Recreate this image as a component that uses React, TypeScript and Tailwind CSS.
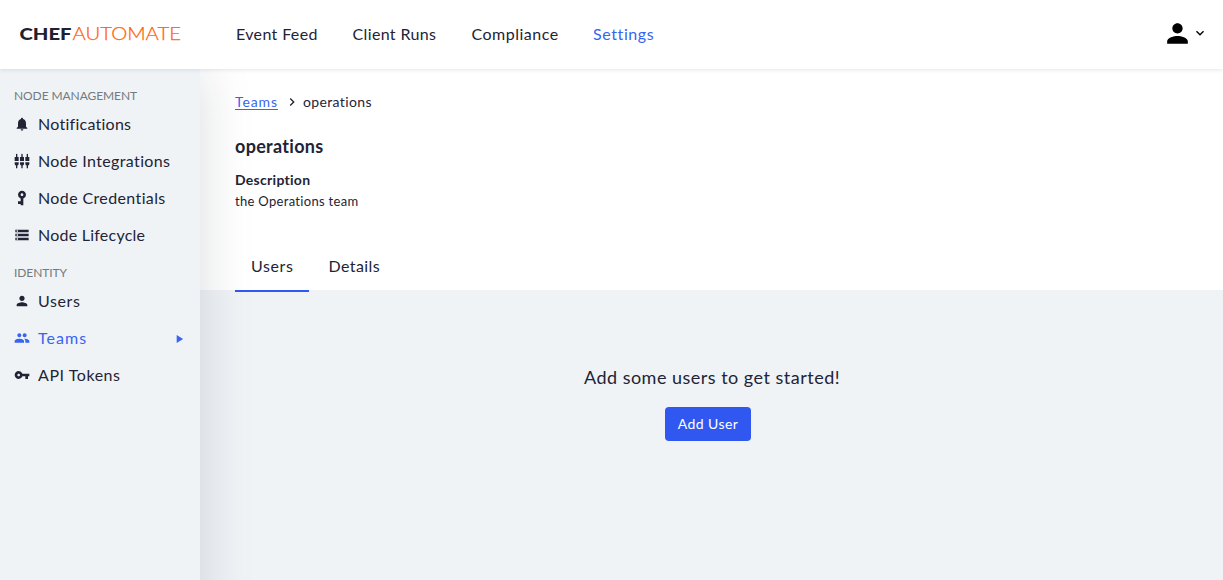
import React from "react";
import {
  MdChevronRight,
  MdExpandMore,
  MdNotifications,
  MdPeople,
  MdPerson,
  MdPlayArrow,
  MdSettingsInputComponent,
  MdStorage,
  MdVpnKey,
} from "react-icons/md";

type Item = {
  label: string;
  icon: React.ReactNode;
  tracking: string;
  active?: boolean;
};

const nodeItems: Item[] = [
  { label: "Notifications", icon: <MdNotifications size={16} />, tracking: "tracking-[0.26px]" },
  { label: "Node Integrations", icon: <MdSettingsInputComponent size={16} />, tracking: "tracking-[0.36px]" },
  { label: "Node Credentials", icon: <MdVpnKey size={16} className="rotate-90" />, tracking: "tracking-[0.38px]" },
  { label: "Node Lifecycle", icon: <MdStorage size={16} />, tracking: "tracking-[0.24px]" },
];

const identityItems: Item[] = [
  { label: "Users", icon: <MdPerson size={16} />, tracking: "tracking-[0.6px]" },
  { label: "Teams", icon: <MdPeople size={16} />, tracking: "tracking-[1.05px]", active: true },
  { label: "API Tokens", icon: <MdVpnKey size={16} />, tracking: "tracking-[0.55px]" },
];

function Logo() {
  return (
    <svg width="164" height="20" viewBox="0 0 164 20" className="block" aria-label="Chef Automate">
      <text x="-0.5" y="16" fontSize="17.6" fontWeight="900" fill="#1f2130" textLength="52" lengthAdjust="spacingAndGlyphs">
        CHEF
      </text>
      <text x="52.5" y="16" fontSize="17.6" fontWeight="300" fill="#ff5f0d" stroke="#ff5f0d" strokeWidth="0.25" textLength="108.5" lengthAdjust="spacingAndGlyphs">
        AUTOMATE
      </text>
    </svg>
  );
}

function SideGroup({ title, items }: { title: string; items: Item[] }) {
  return (
    <section>
      <h2 className="h-[18px] text-[12px] leading-[18px] tracking-[-0.08px] text-[#747a80]">{title}</h2>
      <ul>
        {items.map((item) => (
          <li
            key={item.label}
            className={`flex h-[37px] items-center gap-2 pr-[14px] text-base ${item.active ? "text-[#3864f2]" : ""}`}
          >
            {item.icon}
            <span className={item.tracking}>{item.label}</span>
            {item.active && <MdPlayArrow size={14} className="mt-[2px] ml-auto" />}
          </li>
        ))}
      </ul>
    </section>
  );
}

export default function App() {
  return (
    <div className="flex h-[580px] w-[1223px] flex-col overflow-hidden bg-[#eff3f6] font-['Lato',sans-serif] text-[#222435]">
      <header className="z-20 flex h-[69px] shrink-0 items-center bg-white pr-[15px] pl-[20px] shadow-[0_1px_4px_rgba(30,50,80,0.12)]">
        <div className="w-[216px] pb-[2px]">
          <Logo />
        </div>
        <nav className="flex grow gap-[35px] pb-[2px] text-base">
          <a className="w-[81.5px] whitespace-nowrap tracking-[0.36px]">Event Feed</a>
          <a className="w-[84px] whitespace-nowrap tracking-[0.36px]">Client Runs</a>
          <a className="w-[86.5px] whitespace-nowrap tracking-[0.5px]">Compliance</a>
          <a className="whitespace-nowrap tracking-[0.6px] text-[#3864f2]">Settings</a>
        </nav>
        <div className="flex items-center pb-[3px] text-black">
          <MdPerson size={31} />
          <MdExpandMore size={16} className="-ml-[1px]" />
        </div>
      </header>

      <div className="flex min-h-0 grow items-start">
        <aside className="z-10 flex h-[900px] w-[200px] shrink-0 flex-col gap-[11px] bg-[#eff3f6] pt-[18px] pl-[14px] shadow-[0_0_50px_rgba(20,25,45,0.15)]">
          <SideGroup title="NODE MANAGEMENT" items={nodeItems} />
          <SideGroup title="IDENTITY" items={identityItems} />
        </aside>

        <main className="flex grow flex-col">
          <div className="flex h-[221px] flex-col bg-white pl-[35px]">
            <div className="mt-[23px] flex h-5 items-center text-[14px] leading-5">
              <a className="w-[43px] whitespace-nowrap tracking-[0.9px] text-[#3864f2] underline underline-offset-2">
                Teams
              </a>
              <MdChevronRight size={16} className="mr-[3px] ml-[6px]" />
              <span className="tracking-[0.36px]">operations</span>
            </div>
            <h1 className="mt-[22px] text-[18px] leading-6 font-bold tracking-[0.3px]">operations</h1>
            <h2 className="mt-[12px] text-[14px] leading-5 font-bold tracking-[0.28px]">Description</h2>
            <p className="mt-[1px] text-[13px] leading-5 tracking-[0.31px]">the Operations team</p>
            <div className="mt-auto -mb-[2px] flex h-[50px] text-base">
              <div className="w-[74px] border-b-2 border-[#3058f2] pt-[12px] pl-4 leading-6 tracking-[0.6px]">Users</div>
              <div className="pt-[12px] pl-[19.5px] leading-6 tracking-[0.4px]">Details</div>
            </div>
          </div>
          <div className="flex flex-col items-center pt-[73px] pr-[7px]">
            <p className="pl-[8px] text-[18px] leading-7 tracking-[0.49px]">Add some users to get started!</p>
            <button className="mt-4 h-[34px] w-[86px] rounded-[4px] bg-[#3058f0] pb-[2px] text-[14px] tracking-[0.42px] text-white">
              Add User
            </button>
          </div>
        </main>
      </div>
    </div>
  );
}
